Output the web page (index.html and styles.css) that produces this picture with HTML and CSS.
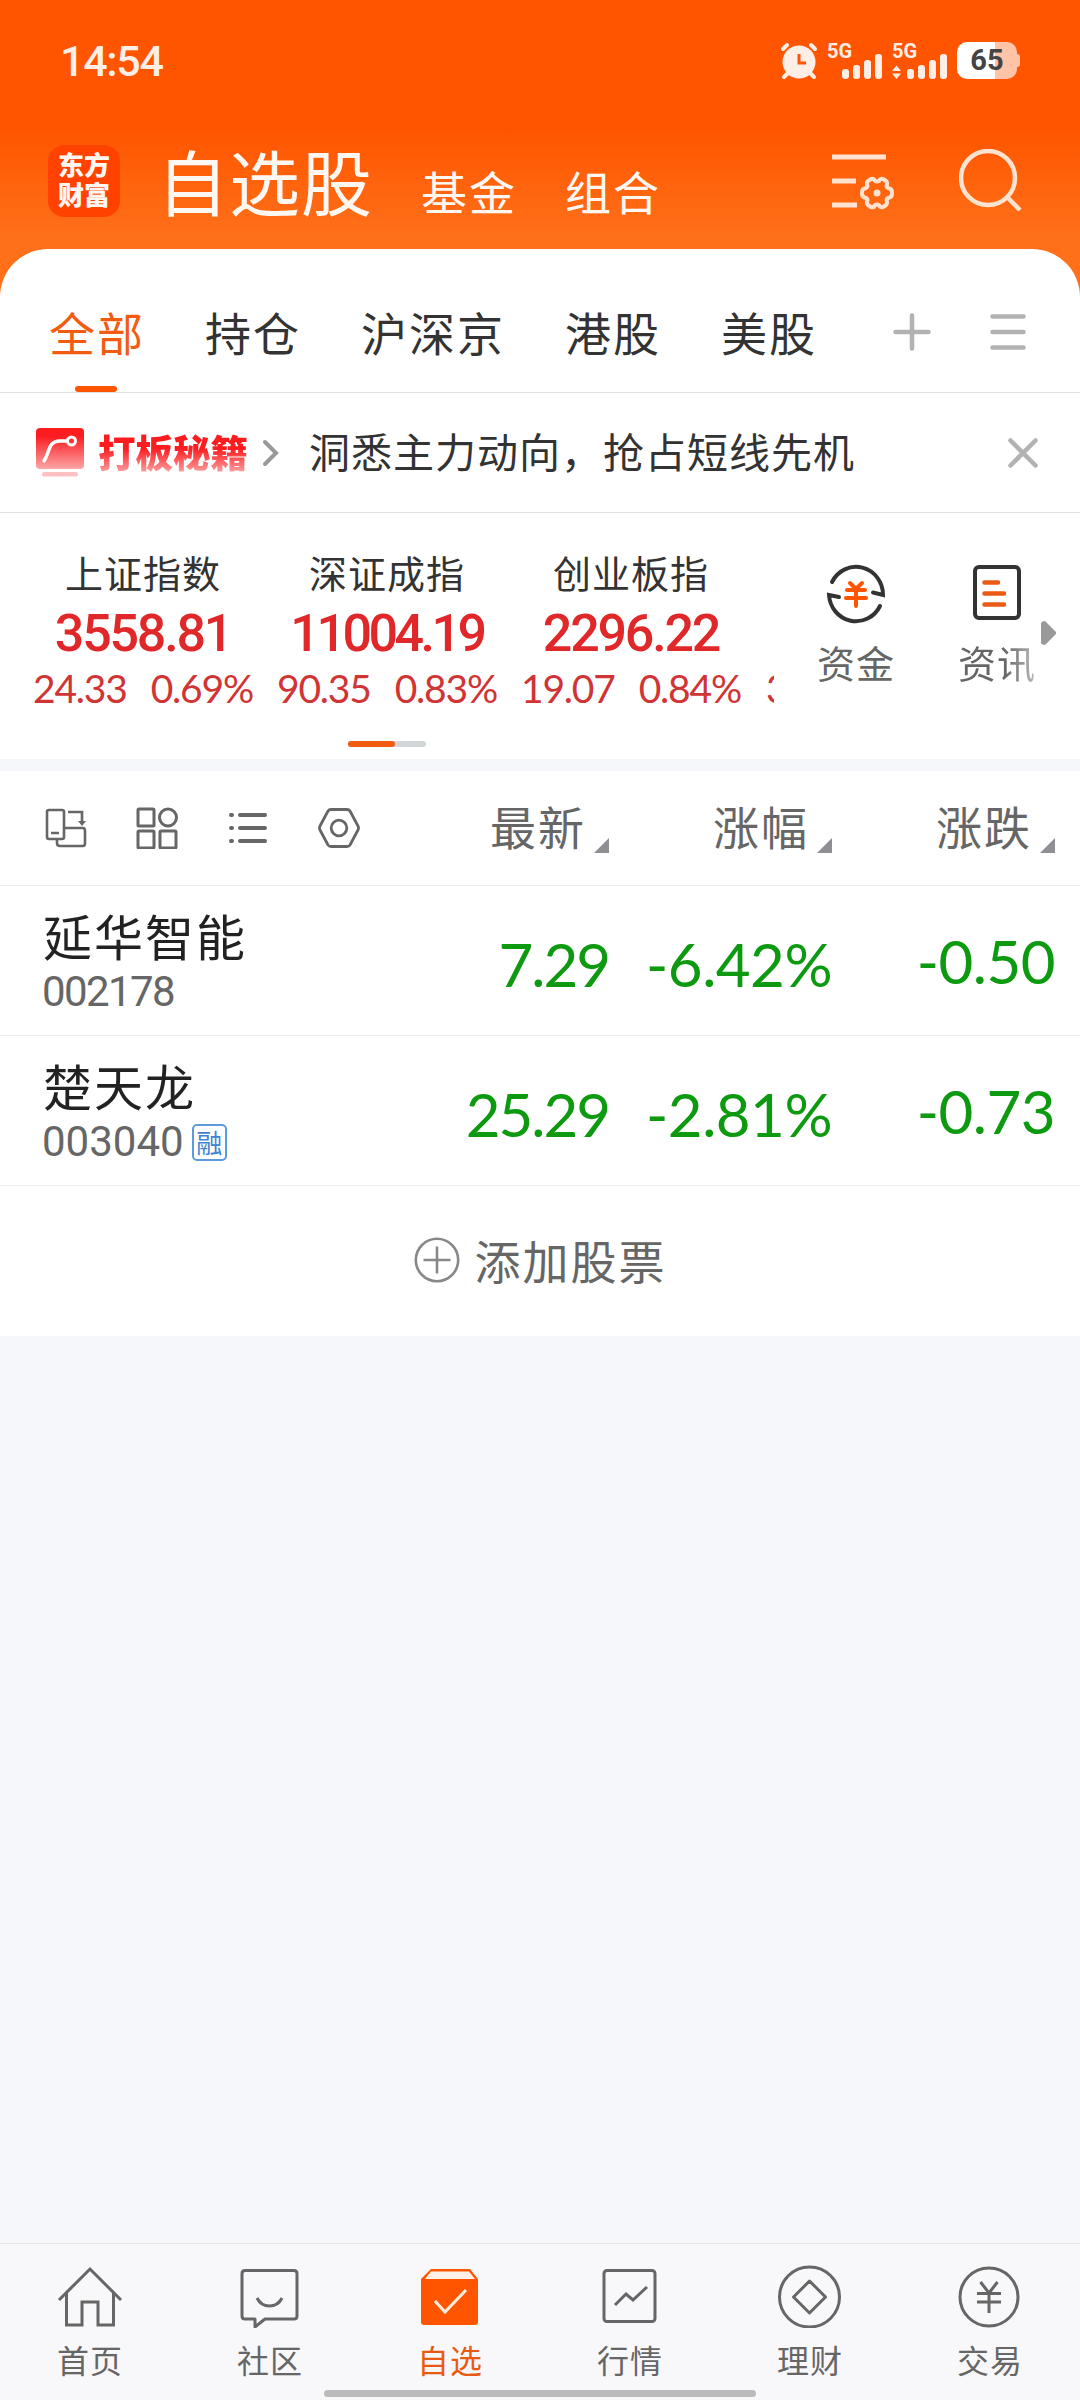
FILE: index.html
```html
<!DOCTYPE html>
<html lang="zh-CN">

<head>
  <meta charset="utf-8">
  <title>自选股</title>
  <link rel="stylesheet" href="styles.css">
</head>
<body>
  <header class="top">
    <div class="status">
      <span class="time">14:54</span>
      <svg class="alarm" width="38" height="38" viewBox="0 0 38 38">
        <g stroke="#ffeee6" stroke-width="4" stroke-linecap="round">
          <path d="M3 7L7 3M31 3L35 7M8 31L4 35M30 31L34 35"/>
        </g>
        <circle cx="19" cy="20" r="16.5" fill="#ffeee6"/>
        <path d="M19 12V21H26" fill="none" stroke="#ff5500" stroke-width="3"/>
      </svg>
      <div class="signal">
        <b>5G</b>
        <svg width="56" height="38" viewBox="0 0 56 38" fill="#ffeee6">
          <rect x="15" y="27" width="7" height="10" rx="3"/>
          <rect x="26" y="23" width="7" height="14" rx="3"/>
          <rect x="37" y="18" width="7" height="19" rx="3"/>
          <rect x="48" y="12" width="7" height="25" rx="3"/>
        </svg>
      </div>
      <div class="signal second">
        <b>5G</b>
        <svg width="56" height="38" viewBox="0 0 56 38" fill="#ffeee6">
          <path d="M0 29L4.500 23.500L9 29zM0 31.500L4.500 37L9 31.500z"/>
          <rect x="15" y="27" width="7" height="10" rx="3"/>
          <rect x="26" y="23" width="7" height="14" rx="3"/>
          <rect x="37" y="18" width="7" height="19" rx="3"/>
          <rect x="48" y="12" width="7" height="25" rx="3"/>
        </svg>
      </div>
      <div class="battery">65</div>
    </div>
    <div class="titlebar">
      <div class="logo">东方<br>财富</div>
      <h1>自选股</h1>
      <span class="switch">基金</span>
      <span class="switch">组合</span>
      <svg class="manage" width="64" height="60" viewBox="0 0 64 60" fill="none" stroke="#ffe3d0" stroke-width="5">
        <path d="M0 5H54M0 29H24M0 53H25"/>
        <path stroke-width="4" stroke-linejoin="round" d="M39 27Q42 26 43 29Q45 30 47 29Q48 26 51 27L54 29Q56 31 54.500 34Q55 36 57.500 36.500Q60 37 60 41Q60 45 57.500 45.500Q55 46 54.500 48Q56 51 54 53L51 55Q48 56 47 53Q45 52 43 53Q42 56 39 55L36 53Q34 51 35.500 48Q35 46 32.500 45.500Q30 45 30 41Q30 37 32.500 36.500Q35 36 35.500 34Q34 31 36 29z"/>
        <circle cx="45" cy="41" r="3.500" fill="#ffe3d0" stroke="none"/>
      </svg>
      <svg class="search" width="64" height="64" viewBox="0 0 64 64" fill="none" stroke="#ffe3d0" stroke-width="4.500">
        <circle cx="29" cy="29" r="27"/>
        <path d="M48 48L61 61"/>
      </svg>
    </div>
  </header>

  <main>
    <nav class="tabs">
      <span class="tab active">全部</span>
      <span class="tab">持仓</span>
      <span class="tab">沪深京</span>
      <span class="tab">港股</span>
      <span class="tab">美股</span>
      <svg class="plus" width="38" height="38" viewBox="0 0 38 38" stroke="#b2b2b2" stroke-width="4.500" stroke-linecap="round">
        <path d="M2.500 19H35.500M19 2.500V35.500"/>
      </svg>
      <svg class="menu" width="36" height="38" viewBox="0 0 36 38" stroke="#b2b2b2" stroke-width="4.500" stroke-linecap="round">
        <path d="M2.500 3.500H33.500M2.500 19H33.500M2.500 34.500H33.500"/>
      </svg>
    </nav>

    <section class="promo">
      <svg width="48" height="50" viewBox="0 0 48 50">
        <defs>
          <linearGradient id="fade" x2="0" y2="1">
            <stop offset=".2" stop-color="#fb1c20"/>
            <stop offset="1" stop-color="#fda5a6"/>
          </linearGradient>
        </defs>
        <rect width="48" height="41" rx="4" fill="url(#fade)"/>
        <path d="M8 33C14 24 12 13 24 13H31" fill="none" stroke="#fff" stroke-width="3.500" stroke-linecap="round"/>
        <circle cx="35.500" cy="13" r="4" fill="none" stroke="#fff" stroke-width="3"/>
        <rect x="6" y="44" width="36" height="4.500" rx="2" fill="#fcc2c3"/>
      </svg>
      <strong>打板秘籍</strong>
      <svg class="chevron" width="17" height="28" viewBox="0 0 17 28" fill="none" stroke="#999" stroke-width="4" stroke-linecap="round">
        <path d="M3 3L14 14L3 25"/>
      </svg>
      <span class="message">洞悉主力动向，抢占短线先机</span>
      <svg class="close" width="30" height="30" viewBox="0 0 30 30" stroke="#b2b2b2" stroke-width="4.500" stroke-linecap="round">
        <path d="M2.500 2.500L27.500 27.500M27.500 2.500L2.500 27.500"/>
      </svg>
    </section>

    <section class="market">
      <div class="indexes">
        <div class="index">
          <h2>上证指数</h2>
          <b>3558.81</b>
          <p><span>24.33</span><span>0.69%</span></p>
        </div>
        <div class="index">
          <h2>深证成指</h2>
          <b class="tight">11004.19</b>
          <p><span>90.35</span><span>0.83%</span></p>
        </div>
        <div class="index">
          <h2>创业板指</h2>
          <b>2296.22</b>
          <p><span>19.07</span><span>0.84%</span></p>
        </div>
        <div class="index next">
          <h2></h2>
          <b></b>
          <p><span>3</span></p>
        </div>
      </div>
      <div class="shortcut funds">
        <svg width="60" height="62" viewBox="0 0 60 62" fill="none" stroke="#333" stroke-width="4" stroke-linecap="round">
          <path d="M6 19A27 28 0 0 1 57 32L47 29.500M54 43A27 28 0 0 1 3 32L13 34"/>
          <path transform="translate(0 1)" stroke="#ff5500" d="M24 19L30 25L36 19M21 26H39M20 34H40M30 26V42"/>
        </svg>
        <span>资金</span>
      </div>
      <div class="shortcut news">
        <svg width="50" height="58" viewBox="0 0 50 58" fill="none" stroke-width="4" stroke-linecap="round">
          <rect x="3" y="4" width="44" height="51" rx="4" stroke="#333"/>
          <path stroke="#ea5a14" d="M12.500 19.500H26M12.500 30.500H32M12.500 41.500H32" stroke-width="4.500"/>
        </svg>
        <span>资讯</span>
      </div>
      <svg class="more" width="15" height="24" viewBox="0 0 15 24">
        <path d="M0 2Q1 0 4 0L15 11V13L4 24Q1 24 0 22z" fill="#999"/>
      </svg>
      <div class="pager"><i></i></div>
    </section>

    <section class="stocks">
      <div class="row head">
        <div class="tools">
          <svg width="42" height="42" viewBox="0 0 42 42" fill="none" stroke="#666" stroke-width="2.600">
            <rect x="2" y="3" width="17" height="29" rx="2"/>
            <path d="M6 26H14M23 5H37V15M12 32V36Q12 39 15 39H38Q40 39 40 36V24Q40 21 38 21H19"/>
            <path d="M33 14H41L37 19z" fill="#666" stroke="none"/>
          </svg>
          <svg width="42" height="42" viewBox="0 0 42 42" fill="none" stroke="#666" stroke-width="3">
            <rect x="2" y="2" width="16" height="17" rx="1"/>
            <circle cx="32" cy="10.500" r="8.500"/>
            <rect x="2" y="24" width="16" height="17" rx="1"/>
            <rect x="24" y="24" width="16" height="17" rx="1"/>
          </svg>
          <svg width="42" height="42" viewBox="0 0 42 42" stroke="#666" stroke-width="4" stroke-linecap="round">
            <path d="M4 8H5M13 8H38M4 21H5M13 21H38M4 34H5M13 34H38"/>
          </svg>
          <svg width="42" height="42" viewBox="0 0 42 42" fill="none" stroke="#666" stroke-width="2.800">
            <path d="M13 2.500H29Q31 2.500 32 4L40 19Q41 21 40 23L32 38Q31 39.500 29 39.500H13Q11 39.500 10 38L2 23Q1 21 2 19L10 4Q11 2.500 13 2.500z"/>
            <circle cx="21" cy="21" r="7.800"/>
          </svg>
        </div>
        <span class="col">最新</span>
        <span class="col">涨幅</span>
        <span class="col">涨跌</span>
      </div>
      <div class="row">
        <div class="stock">
          <h3>延华智能</h3>
          <p class="tight">002178</p>
        </div>
        <span class="num price">7.29</span>
        <span class="num">-6.42%</span>
        <span class="num change">-0.50</span>
      </div>
      <div class="row">
        <div class="stock">
          <h3>楚天龙</h3>
          <p>003040<em>融</em></p>
        </div>
        <span class="num price">25.29</span>
        <span class="num">-2.81%</span>
        <span class="num change">-0.73</span>
      </div>
      <div class="add">
        <svg width="46" height="46" viewBox="0 0 46 46" fill="none" stroke="#888" stroke-width="2.600">
          <circle cx="23" cy="23" r="21.200"/>
          <path d="M9.500 23H36.500M23 9.500V36.500"/>
        </svg>
        <span>添加股票</span>
      </div>
    </section>
  </main>

  <footer class="nav">
    <div class="item">
      <svg width="66" height="64" viewBox="0 0 66 64" fill="none" stroke="#666" stroke-width="3">
        <path d="M2 36L33 5L64 36M9.500 29V61H25V38H41V61H56.500V29"/>
      </svg>
      <span>首页</span>
    </div>
    <div class="item">
      <svg width="66" height="64" viewBox="0 0 66 64" fill="none" stroke="#666" stroke-width="3" stroke-linejoin="round">
        <path d="M8 6.500H57Q60 6.500 60 9.500V52Q60 55 57 55H28L18 63V55H8Q5 55 5 52V9.500Q5 6.500 8 6.500z"/>
        <path d="M20 34Q24 42 32.500 42T45 34"/>
      </svg>
      <span>社区</span>
    </div>
    <div class="item active">
      <svg width="66" height="64" viewBox="0 0 66 64" fill="none">
        <path d="M14 5H53L61 15V58Q61 61 58 61H7Q4 61 4 58V15z" fill="#ff5500"/>
        <path d="M14 7.500H52L58 15H8z" fill="#fff0e8"/>
        <path d="M18 37L28 48L49 26" stroke="#ffeee0" stroke-width="3"/>
      </svg>
      <span>自选</span>
    </div>
    <div class="item">
      <svg width="66" height="64" viewBox="0 0 66 64" fill="none" stroke="#666" stroke-width="3">
        <rect x="7" y="6.500" width="51" height="51" rx="3"/>
        <path d="M18 41L29 30L36 36L50 23"/>
      </svg>
      <span>行情</span>
    </div>
    <div class="item">
      <svg width="66" height="64" viewBox="0 0 66 64" fill="none" stroke="#666" stroke-width="3">
        <circle cx="32.500" cy="33" r="30"/>
        <path d="M32.500 17L48.500 33L32.500 49L16.500 33z" stroke-linejoin="round"/>
      </svg>
      <span>理财</span>
    </div>
    <div class="item">
      <svg width="66" height="64" viewBox="0 0 66 64" fill="none" stroke="#666" stroke-width="3">
        <circle cx="32" cy="33" r="29"/>
        <path d="M23.500 18L32 29L40.500 18M20 29.500H44M20 38H44M32 29V49"/>
      </svg>
      <span>交易</span>
    </div>
    <div class="home-bar"></div>
  </footer>
</body>
</html>
```
FILE: styles.css
```css
* {
  box-sizing: border-box;
}
body {
  margin: 0;
  width: 1080px;
  height: 2400px;
  display: flex;
  flex-direction: column;
  background: #f6f7fa;
  color: #333;
  font-family: "Noto Sans CJK SC", sans-serif;
}
h1, h2, h3, p {
  margin: 0;
  font-weight: normal;
}
svg {
  display: block;
  flex: none;
}

/* header */
.top {
  height: 300px;
  flex: none;
  background: linear-gradient(#ff5500 130px, #ff7019 235px);
  color: #fff8f2;
}
.status {
  display: flex;
  height: 122px;
  padding: 42px 63px 0 60px;
  font-family: Roboto, sans-serif;
}
.time {
  margin-right: auto;
  font-size: 43px;
  font-weight: 500;
  line-height: 38px;
  letter-spacing: -1.3px;
  color: #ffeee6;
}
.signal {
  position: relative;
  margin-left: 9px;
}
.signal.second {
  margin-left: 9px;
}
.signal b {
  position: absolute;
  left: 0;
  top: 0;
  font-size: 20px;
  line-height: 18px;
  color: #ffeee6;
}
.battery {
  position: relative;
  width: 60px;
  height: 37px;
  margin-left: 9px;
  border-radius: 10px;
  background: linear-gradient(90deg, #fff 38px, #ffc4a8 38px);
  color: #444;
  font-size: 29px;
  font-weight: 700;
  line-height: 37px;
  text-align: center;
}
.battery::after {
  content: "";
  position: absolute;
  right: -3px;
  top: 12px;
  width: 3px;
  height: 13px;
  border-radius: 0 3px 3px 0;
  background: #ffc4a8;
}
.titlebar {
  display: flex;
  align-items: flex-start;
  padding: 0 57px 0 48px;
}
.logo {
  width: 72px;
  height: 72px;
  margin-top: 23px;
  padding-top: 4px;
  border-radius: 16px;
  background: #ff4200;
  font-size: 26px;
  font-weight: 900;
  line-height: 30px;
  text-align: center;
}
.titlebar h1 {
  margin: 7px 0 0 37px;
  font-size: 71px;
  line-height: 100px;
  letter-spacing: 1px;
}
.switch {
  margin: 38px 0 0 48px;
  font-size: 46px;
  line-height: 60px;
  letter-spacing: 2px;
}
.manage {
  margin: 35px 0 0 auto;
  margin-top: 30px;
}
.search {
  margin: 27px 0 0 63px;
}

/* category tabs */
main {
  margin-top: -51px;
  border-radius: 48px 48px 0 0;
  background: #fff;
}
.tabs {
  display: flex;
  align-items: center;
  gap: 60px;
  height: 144px;
  padding: 0 54px 0 49px;
  border-bottom: 1px solid #e2e2e2;
}
.tab {
  position: relative;
  font-size: 46px;
  line-height: 70px;
  letter-spacing: 2px;
  padding-top: 20px;
}
.tab.active {
  color: #f25c10;
}
.tab.active::after {
  content: "";
  position: absolute;
  left: 26px;
  bottom: -26px;
  width: 42px;
  height: 6px;
  border-radius: 3px;
  background: #ff5500;
}
.plus {
  margin: 22px 0 0 auto;
}
.menu {
  margin: 22px 0 0 -1px;
}

/* promo line */
.promo {
  display: flex;
  align-items: center;
  height: 120px;
  padding: 0 42px 0 36px;
  border-bottom: 1px solid #e2e2e2;
}
.promo strong {
  margin: -3px 0 0 14px;
  font-size: 37.5px;
  font-weight: 900;
  line-height: 50px;
  background: linear-gradient(#fb1c20 45%, #fda5a6 95%);
  -webkit-background-clip: text;
  background-clip: text;
  color: transparent;
}
.chevron {
  margin-left: 14px;
}
.message {
  margin: -5px 0 0 30px;
  font-size: 41px;
  letter-spacing: 1px;
  line-height: 60px;
}
.close {
  margin-left: auto;
}

/* index strip */
.market {
  position: relative;
  display: flex;
  height: 258px;
  border-bottom: 12px solid #f6f7fa;
}
.indexes {
  display: flex;
  width: 753px;
  margin-left: 21px;
  overflow: hidden;
}
.index {
  flex: none;
  width: 244px;
  padding-top: 35px;
  text-align: center;
  color: #e0282a;
}
.index h2 {
  height: 53px;
  font-size: 38px;
  line-height: 48px;
  letter-spacing: 1px;
  color: #333;
}
.index b {
  display: block;
  height: 65px;
  font: 500 52px/66px Roboto, sans-serif;
  letter-spacing: -2.2px;
}
.index .tight {
  letter-spacing: -3.5px;
}
.index p {
  display: flex;
  justify-content: center;
  gap: 24px;
  color: #d03434;
  font: 39px/44px Lato, sans-serif;
  letter-spacing: -1.2px;
}
.index.next p {
  justify-content: flex-start;
  padding-left: 13px;
}
.shortcut {
  display: flex;
  flex-direction: column;
  align-items: center;
  padding-top: 50px;
  color: #666;
  font-size: 38px;
  line-height: 50px;
  letter-spacing: 1px;
}
.funds {
  margin-left: 43px;
}
.funds span {
  margin-top: 12px;
}
.news {
  margin-left: 63px;
}
.news svg {
  margin-bottom: 16px;
}
.news span {
  background: linear-gradient(90deg, #666 60%, #bbb);
  -webkit-background-clip: text;
  background-clip: text;
  color: transparent;
}
.more {
  margin: 108px 0 0 5px;
}
.pager {
  position: absolute;
  left: 348px;
  top: 228px;
  width: 78px;
  height: 6px;
  border-radius: 3px;
  background: #d1d6d8;
}
.pager i {
  display: block;
  width: 47px;
  height: 6px;
  border-radius: 3px;
  background: #f25c10;
}

/* stock table */
.row {
  display: grid;
  grid-template-columns: 386px 223px 223px 223px;
  height: 150px;
  border-bottom: 1px solid #ececec;
}
.row.head {
  height: 115px;
  align-items: center;
}
.tools {
  display: flex;
  gap: 49px;
  padding-left: 45px;
}
.col {
  display: flex;
  justify-content: flex-end;
  align-items: flex-end;
  margin-top: -7px;
  color: #666;
  font-size: 46px;
  line-height: 60px;
  letter-spacing: 2px;
}
.col::after {
  content: "";
  margin: 0 0 2px 8px;
  border-left: 15px solid transparent;
  border-bottom: 15px solid #8e8e93;
}
.stock {
  padding: 19px 0 0 43px;
}
.stock h3 {
  color: #222;
  font-size: 49px;
  line-height: 60px;
  letter-spacing: 2px;
}
.stock p {
  display: flex;
  align-items: center;
  margin: 4px 0 0 -1px;
  color: #666;
  font: 42px/46px Roboto, sans-serif;
}
.stock .tight {
  letter-spacing: -1.6px;
}
.stock em {
  width: 35px;
  height: 37px;
  margin-left: 8px;
  border: 2px solid #5b9bdc;
  border-radius: 5px;
  color: #4084cf;
  font: 26px/31px "Noto Sans CJK SC", sans-serif;
  text-align: center;
}
.num {
  color: #0d9a10;
  font: 60px/156px Lato, sans-serif;
  letter-spacing: -0.5px;
  text-align: right;
  white-space: nowrap;
}
.num.price {
  letter-spacing: -2px;
}
.num.change {
  line-height: 150px;
}
.add {
  display: flex;
  align-items: center;
  justify-content: center;
  gap: 15px;
  height: 150px;
  color: #666;
  font-size: 46px;
  letter-spacing: 2px;
}
.add svg {
  margin-top: -2px;
}
.add span {
  margin-top: -5px;
}

/* bottom navigation */
.nav {
  position: relative;
  display: grid;
  grid-template-columns: repeat(6, 1fr);
  height: 157px;
  margin-top: auto;
  border-top: 1px solid #e2e4e6;
  background: #f8f8fa;
}
.item {
  display: flex;
  flex-direction: column;
  align-items: center;
  padding-top: 20px;
  color: #666;
  font-size: 32px;
  line-height: 50px;
  letter-spacing: 1px;
}
.item span {
  margin-top: 6px;
}
.item.active {
  color: #e85a14;
}
.home-bar {
  position: absolute;
  left: 324px;
  bottom: 3px;
  width: 432px;
  height: 7px;
  border-radius: 4px;
  background: #bbb;
}
```
